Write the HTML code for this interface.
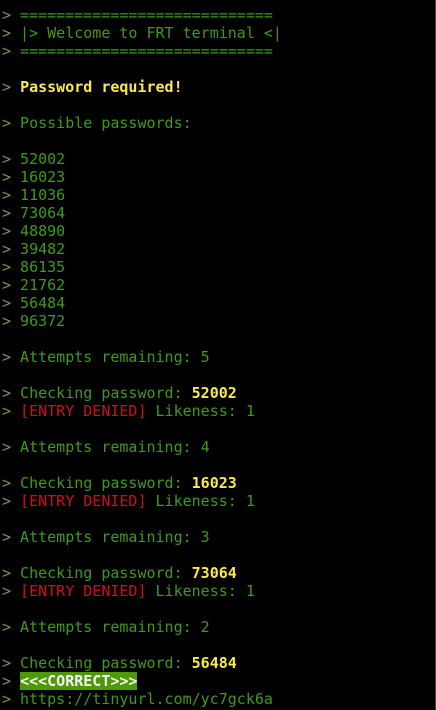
<!DOCTYPE html>
<html><head><style>
html,body{margin:0;background:#000;width:436px;height:710px;overflow:hidden}
body{border-right:1px solid #444;box-sizing:border-box}
pre{margin:0;padding:6px 0 0 2px;font-family:"DejaVu Sans Mono","Liberation Mono",monospace;font-size:15px;line-height:18px;color:#3e9a1a}
.p{color:#6f9a55}
.y{color:#fce94f;font-weight:bold}
.r{color:#d01010}
.c{background:#4e9a06;color:#f4f4f4;font-weight:bold}
</style></head><body><pre><span class="p">&gt;</span> ============================
<span class="p">&gt;</span> |&gt; Welcome to FRT terminal &lt;|
<span class="p">&gt;</span> ============================

<span class="p">&gt;</span> <span class="y">Password required!</span>

<span class="p">&gt;</span> Possible passwords:

<span class="p">&gt;</span> 52002
<span class="p">&gt;</span> 16023
<span class="p">&gt;</span> 11036
<span class="p">&gt;</span> 73064
<span class="p">&gt;</span> 48890
<span class="p">&gt;</span> 39482
<span class="p">&gt;</span> 86135
<span class="p">&gt;</span> 21762
<span class="p">&gt;</span> 56484
<span class="p">&gt;</span> 96372

<span class="p">&gt;</span> Attempts remaining: 5

<span class="p">&gt;</span> Checking password: <span class="y">52002</span>
<span class="p">&gt;</span> <span class="r">[ENTRY DENIED]</span> Likeness: 1

<span class="p">&gt;</span> Attempts remaining: 4

<span class="p">&gt;</span> Checking password: <span class="y">16023</span>
<span class="p">&gt;</span> <span class="r">[ENTRY DENIED]</span> Likeness: 1

<span class="p">&gt;</span> Attempts remaining: 3

<span class="p">&gt;</span> Checking password: <span class="y">73064</span>
<span class="p">&gt;</span> <span class="r">[ENTRY DENIED]</span> Likeness: 1

<span class="p">&gt;</span> Attempts remaining: 2

<span class="p">&gt;</span> Checking password: <span class="y">56484</span>
<span class="p">&gt;</span> <span class="c">&lt;&lt;&lt;CORRECT&gt;&gt;&gt;</span>
<span class="p">&gt;</span> https://tinyurl.com/yc7gck6a</pre></body></html>
